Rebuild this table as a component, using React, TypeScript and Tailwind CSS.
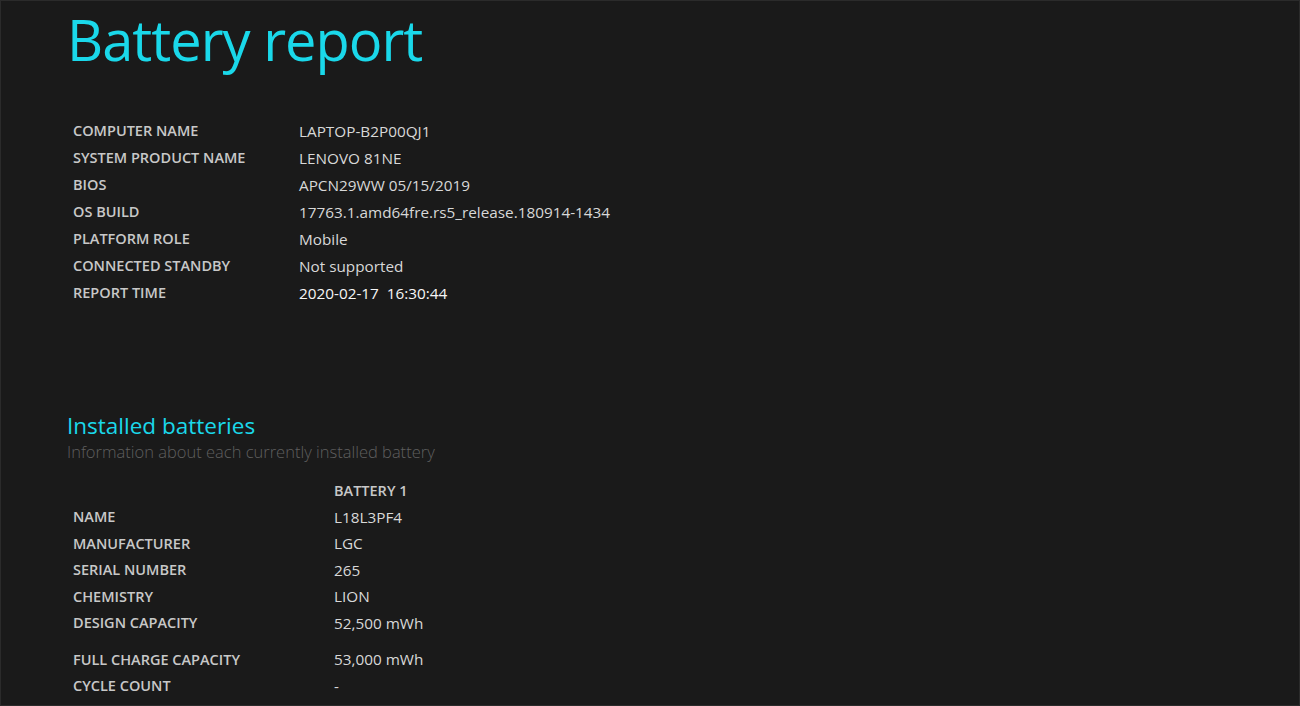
const systemRows: [string, string][] = [
  ["COMPUTER NAME", "LAPTOP-B2P00QJ1"],
  ["SYSTEM PRODUCT NAME", "LENOVO 81NE"],
  ["BIOS", "APCN29WW 05/15/2019"],
  ["OS BUILD", "17763.1.amd64fre.rs5_release.180914-1434"],
  ["PLATFORM ROLE", "Mobile"],
  ["CONNECTED STANDBY", "Not supported"],
]

const batteryRows: [string, string][] = [
  ["NAME", "L18L3PF4"],
  ["MANUFACTURER", "LGC"],
  ["SERIAL NUMBER", "265"],
  ["CHEMISTRY", "LION"],
  ["DESIGN CAPACITY", "52,500 mWh"],
]

export default function App() {
  return (
    <div
      className="w-[1300px] h-[706px] overflow-hidden bg-[#1a1a1a] border border-[#2b2b2b] text-[#dcdcdc]"
      style={{ fontFamily: '"Open Sans", "Noto Sans", sans-serif' }}
    >
      <div className="pl-[66px]">
        {/* Title */}
        <h1 className="text-[56px] leading-[76px] font-normal text-[#1ad8ea] tracking-[-1px]">
          Battery report
        </h1>

        {/* System info */}
        <table className="mt-[41px] ml-[6px] border-collapse">
          <tbody>
            {systemRows.map(([label, value]) => (
              <tr key={label} className="h-[27px]">
                <td className="w-[226px] p-0 leading-none text-[14.5px] font-semibold text-[#c8c8c8]">
                  {label}
                </td>
                <td className="p-0 leading-none text-[15.3px] text-[#d8d8d8]">{value}</td>
              </tr>
            ))}
            <tr className="h-[27px]">
              <td className="w-[226px] p-0 leading-none text-[14.5px] font-semibold text-[#c8c8c8]">
                REPORT TIME
              </td>
              <td className="p-0 leading-none text-[15.3px] font-medium text-[#f6f6f6]">
                2020-02-17&nbsp;&nbsp;16:30:44
              </td>
            </tr>
          </tbody>
        </table>

        {/* Installed batteries */}
        <h2 className="mt-[105px] text-[22.5px] leading-[28px] text-[#1ad8ea]">
          Installed batteries
        </h2>
        <p className="text-[16.5px] leading-[24px] font-light text-[#5f5f5f]">
          Information about each currently installed battery
        </p>

        <table className="mt-[14px] ml-[6px] border-collapse">
          <tbody>
            <tr className="h-[26px]">
              <td className="w-[261px] p-0" />
              <td className="p-0 leading-none text-[14.5px] font-semibold text-[#c8c8c8]">
                BATTERY 1
              </td>
            </tr>
            {batteryRows.map(([label, value]) => (
              <tr key={label} className="h-[26.5px]">
                <td className="w-[261px] p-0 leading-none text-[14.5px] font-semibold text-[#c8c8c8]">
                  {label}
                </td>
                <td className="p-0 leading-none text-[15.3px] text-[#d8d8d8]">{value}</td>
              </tr>
            ))}
            <tr className="h-[10px]" />
            <tr className="h-[26.5px]">
              <td className="w-[261px] p-0 leading-none text-[14.5px] font-semibold text-[#c8c8c8]">
                FULL CHARGE CAPACITY
              </td>
              <td className="p-0 leading-none text-[15.3px] text-[#d8d8d8]">53,000 mWh</td>
            </tr>
            <tr className="h-[26.5px]">
              <td className="w-[261px] p-0 leading-none text-[14.5px] font-semibold text-[#c8c8c8]">
                CYCLE COUNT
              </td>
              <td className="p-0 leading-none text-[15.3px] text-[#d8d8d8]">-</td>
            </tr>
          </tbody>
        </table>
      </div>
    </div>
  )
}
